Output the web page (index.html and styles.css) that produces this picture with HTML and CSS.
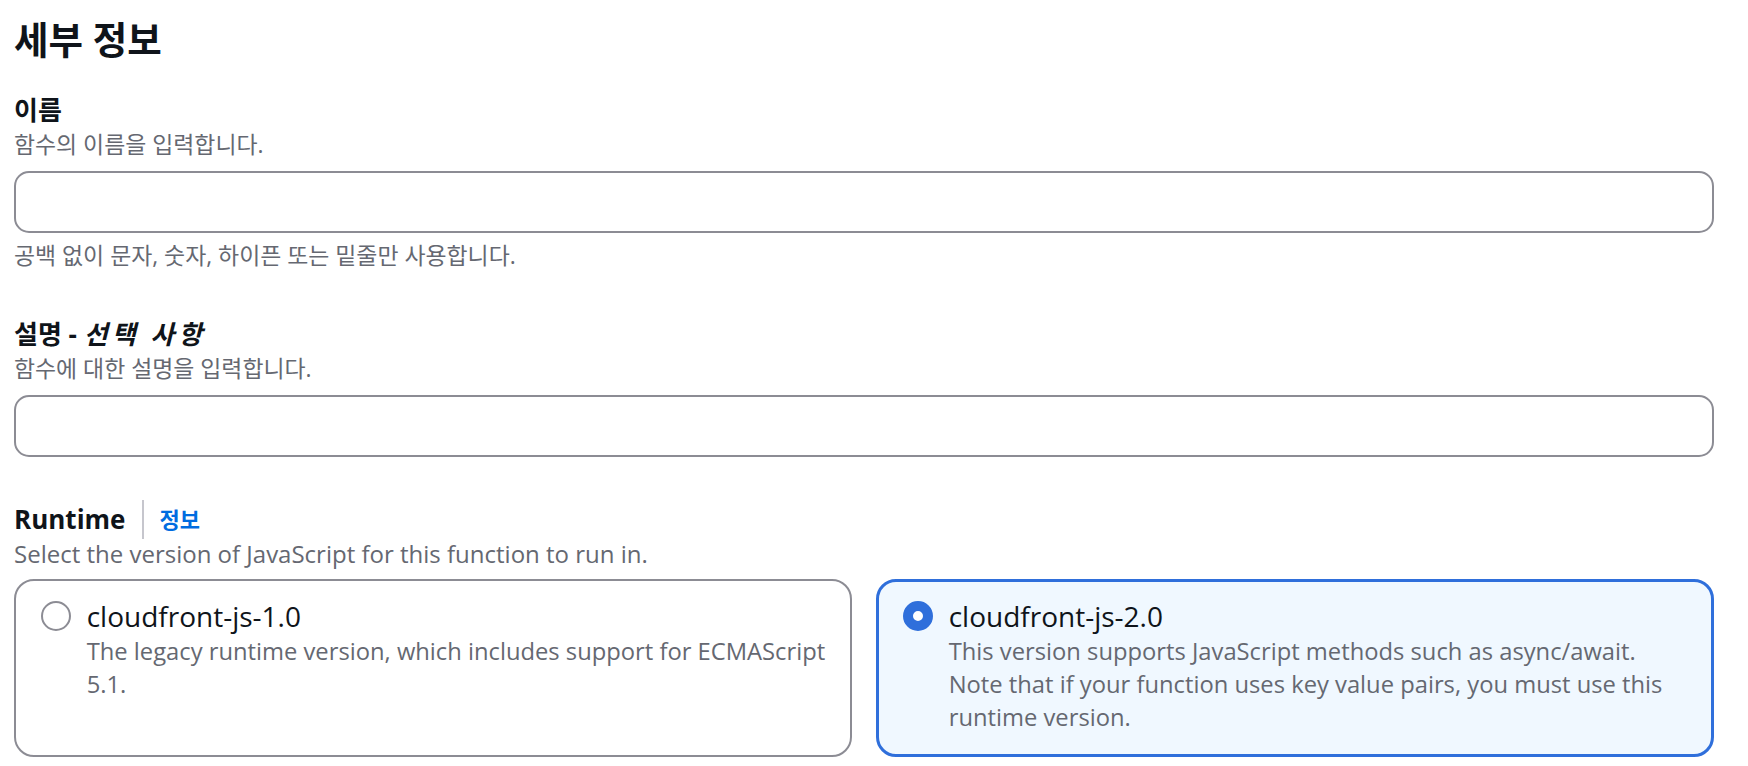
FILE: index.html
```html
<!DOCTYPE html>
<html lang="ko">
<head>
<meta charset="utf-8">
<title>세부 정보</title>
<link rel="stylesheet" href="styles.css">
</head>
<body>
<div class="page">
  <h2 class="heading">세부 정보</h2>
  <div class="fields">
    <div class="field">
      <label class="label">이름</label>
      <div class="desc">함수의 이름을 입력합니다.</div>
      <input class="input" type="text">
      <div class="constraint">공백 없이 문자, 숫자, 하이픈 또는 밑줄만 사용합니다.</div>
    </div>
    <div class="field">
      <label class="label">설명 - <i class="optional">선택 사항</i></label>
      <div class="desc">함수에 대한 설명을 입력합니다.</div>
      <input class="input" type="text">
    </div>
    <div class="field field-runtime">
      <div class="label-row">
        <span class="label label-en">Runtime</span>
        <span class="sep"></span>
        <a class="info">정보</a>
      </div>
      <div class="desc desc-en">Select the version of JavaScript for this function to run in.</div>
      <div class="tiles">
        <div class="tile">
          <span class="radio"></span>
          <div class="tile-text">
            <div class="tile-title">cloudfront-js-1.0</div>
            <div class="tile-desc">The legacy runtime version, which includes support for ECMAScript 5.1.</div>
          </div>
        </div>
        <div class="tile tile-selected">
          <span class="radio radio-checked"></span>
          <div class="tile-text">
            <div class="tile-title">cloudfront-js-2.0</div>
            <div class="tile-desc">This version supports JavaScript methods such as async/await.<br>Note that if your function uses key value pairs, you must use this runtime version.</div>
          </div>
        </div>
      </div>
    </div>
  </div>
</div>
</body>
</html>
```

FILE: styles.css
```css
html, body {
  margin: 0;
  padding: 0;
  background: #ffffff;
}

body {
  font-family: "Open Sans", "Noto Sans CJK KR", sans-serif;
  color: #0f141a;
  overflow: hidden;
}

.page {
  padding: 18px 34px 0 14px;
}

.heading {
  margin: 0;
  font-size: 37.5px;
  line-height: 44px;
  font-weight: 700;
  color: #0f141a;
}

.fields {
  margin-top: 30px;
  display: flex;
  flex-direction: column;
}

.field + .field {
  margin-top: 43.5px;
}

.field-runtime {
  margin-top: 44.5px !important;
}

.label {
  display: block;
  font-size: 26px;
  line-height: 36px;
  font-weight: 700;
  color: #0f141a;
}

.optional {
  font-style: italic;
  letter-spacing: 4px;
}

.desc {
  font-size: 22.9px;
  line-height: 34px;
  color: #656871;
}

.desc-en {
  font-size: 24px;
  line-height: 33px;
}

.input {
  display: block;
  box-sizing: border-box;
  width: 100%;
  height: 62px;
  margin: 9px 0 0 0;
  border: 2px solid #8c8c94;
  border-radius: 15px;
  background: #ffffff;
  padding: 0 20px;
  font-family: inherit;
  font-size: 23px;
  outline: none;
}

.constraint {
  margin-top: 7px;
  font-size: 22.9px;
  line-height: 32px;
  color: #656871;
}

.label-row {
  display: flex;
  align-items: center;
  height: 36px;
}

.label-en {
  display: inline;
}

.sep {
  width: 2px;
  height: 39px;
  margin: -1.5px 15px -1.5px 17px;
  background: #c6c6cd;
}

.info {
  font-size: 22px;
  line-height: 36px;
  font-weight: 700;
  color: #006ce0;
  text-decoration: none;
}

.tiles {
  margin-top: 8.5px;
  display: grid;
  grid-template-columns: 1fr 1fr;
  gap: 24px;
}

.tile {
  display: flex;
  align-items: flex-start;
  gap: 16px;
  border: 2px solid #8c8c94;
  border-radius: 20px;
  padding: 18px 14px 21.5px 24.7px;
  background: #ffffff;
}

.tile-selected {
  border: 3px solid #2f6fdb;
  padding: 17px 13px 20.5px 23.7px;
  background: #f0f8ff;
}

.radio {
  flex: none;
  box-sizing: border-box;
  width: 30px;
  height: 30px;
  margin-top: 2.5px;
  border: 2px solid #8c8c94;
  border-radius: 50%;
  background: #ffffff;
}

.radio-checked {
  border: 10px solid #2f6fdb;
}

.tile-text {
  flex: 1;
  min-width: 0;
}

.tile-title {
  font-size: 28px;
  line-height: 35px;
  color: #0f141a;
}

.tile-desc {
  margin-top: 1px;
  font-size: 23.75px;
  line-height: 33px;
  color: #656871;
}
```
